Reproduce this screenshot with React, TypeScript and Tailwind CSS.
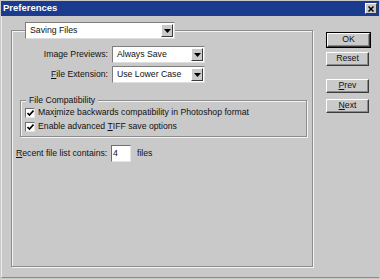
import React from "react";

const font = { fontFamily: '"Liberation Sans", Arial, sans-serif' };

const Arrow = () => (
    <svg width="7" height="4" viewBox="0 0 7 4">
        <path d="M0 0h7L3.5 4z" fill="#000" />
    </svg>
);

const Select = ({ value, width }: { value: string; width: string }) => (
    <div
        className={`flex h-[17px] ${width} items-center bg-white border border-t-[#7d7d7d] border-l-[#7d7d7d] border-r-[#dedede] border-b-[#dedede] p-[1px]`}
    >
        <span className="flex-1 pl-[3px] leading-none">{value}</span>
        <span className="flex h-full w-[12px] items-center justify-center bg-[#cacaca] border border-t-white border-l-white border-r-[#3c3c3c] border-b-[#3c3c3c]">
            <Arrow />
        </span>
    </div>
);

const Check = ({ children }: { children: React.ReactNode }) => (
    <div className="flex h-[14px] items-center gap-[3px]">
        <span className="flex h-[10px] w-[10px] items-center justify-center bg-white border border-t-[#6e6e6e] border-l-[#6e6e6e] border-r-[#e4e4e4] border-b-[#e4e4e4]">
            <svg width="7" height="7" viewBox="0 0 7 7">
                <path d="M0.5 3l2 2 4-4.5" stroke="#000" strokeWidth="1.6" fill="none" />
            </svg>
        </span>
        <span>{children}</span>
    </div>
);

const Button = ({ children, def }: { children: React.ReactNode; def?: boolean }) => {
    const inner = (
        <div className="flex h-[14px] w-[43px] items-center justify-center bg-[#cacaca] border border-t-white border-l-white border-r-[#3c3c3c] border-b-[#3c3c3c] shadow-[inset_-1px_-1px_0_#8a8a8a]">
            {children}
        </div>
    );
    if (!def) return inner;
    return <div className="border border-black">{inner}</div>;
};

export default function App() {
    return (
        <div
            className="flex h-[279px] w-[380px] flex-col overflow-hidden bg-[#c9c9c9] p-[1px] text-[8.7px] text-[#111]"
            style={font}
        >
            <div className="flex h-[15px] items-center justify-between bg-[#1b3b8e] pl-[2px] pr-[2px]">
                <span className="text-[9.5px] font-bold text-white">Preferences</span>
                <span className="flex h-[11px] w-[12px] items-center justify-center bg-[#cacaca] border border-t-white border-l-white border-r-[#3c3c3c] border-b-[#3c3c3c]">
                    <svg width="6" height="6" viewBox="0 0 6 6">
                        <path d="M0.5 0.5l5 5M5.5 0.5l-5 5" stroke="#000" strokeWidth="1.5" />
                    </svg>
                </span>
            </div>

            <div className="flex flex-1 border-l border-b border-l-[#ececec] border-b-[#8a8a8a] pl-[9px] pt-[6px]">
                <fieldset className="h-[245px] w-[302px] border border-[#8c8c8c] pl-[4px] shadow-[inset_1px_1px_0_#f4f4f4,1px_1px_0_#f4f4f4]">
                    <legend className="ml-[9px]">
                        <Select value="Saving Files" width="w-[150px]" />
                    </legend>

                    <div className="mt-[7px] flex flex-col gap-[3px]">
                        <div className="flex items-center gap-[4px]">
                            <span className="w-[92px] text-right">Image Previews:</span>
                            <Select value="Always Save" width="w-[93px]" />
                        </div>
                        <div className="flex items-center gap-[4px]">
                            <span className="w-[92px] text-right">
                                <span className="underline">F</span>ile Extension:
                            </span>
                            <Select value="Use Lower Case" width="w-[93px]" />
                        </div>
                    </div>

                    <fieldset className="ml-[4px] mt-[12px] w-[287px] border border-[#8c8c8c] pb-[2px] pl-[4px] shadow-[inset_1px_1px_0_#f4f4f4,1px_1px_0_#f4f4f4]">
                        <legend className="ml-[1px] bg-[#c9c9c9] px-[3px] leading-[11px]">File Compatibility</legend>
                        <Check>
                            Max<span className="underline">i</span>mize backwards compatibility in Photoshop format
                        </Check>
                        <Check>
                            Enable advanced <span className="underline">T</span>IFF save options
                        </Check>
                    </fieldset>

                    <div className="mt-[8px] flex items-center">
                        <span className="w-[95px]">
                            <span className="underline">R</span>ecent file list contains:
                        </span>
                        <span className="flex h-[17px] w-[20px] items-center bg-white pl-[1px] border border-t-[#6e6e6e] border-l-[#6e6e6e] border-r-[#e4e4e4] border-b-[#e4e4e4]">
                            4
                        </span>
                        <span className="ml-[6px]">files</span>
                    </div>
                </fieldset>

                <div className="ml-[13px] mt-[10px] flex flex-col">
                    <Button def>OK</Button>
                    <div className="mt-[4px]">
                        <Button>Reset</Button>
                    </div>
                    <div className="mt-[13px]">
                        <Button>
                            <span className="underline">P</span>rev
                        </Button>
                    </div>
                    <div className="mt-[6px]">
                        <Button>
                            <span className="underline">N</span>ext
                        </Button>
                    </div>
                </div>
            </div>
        </div>
    );
}
